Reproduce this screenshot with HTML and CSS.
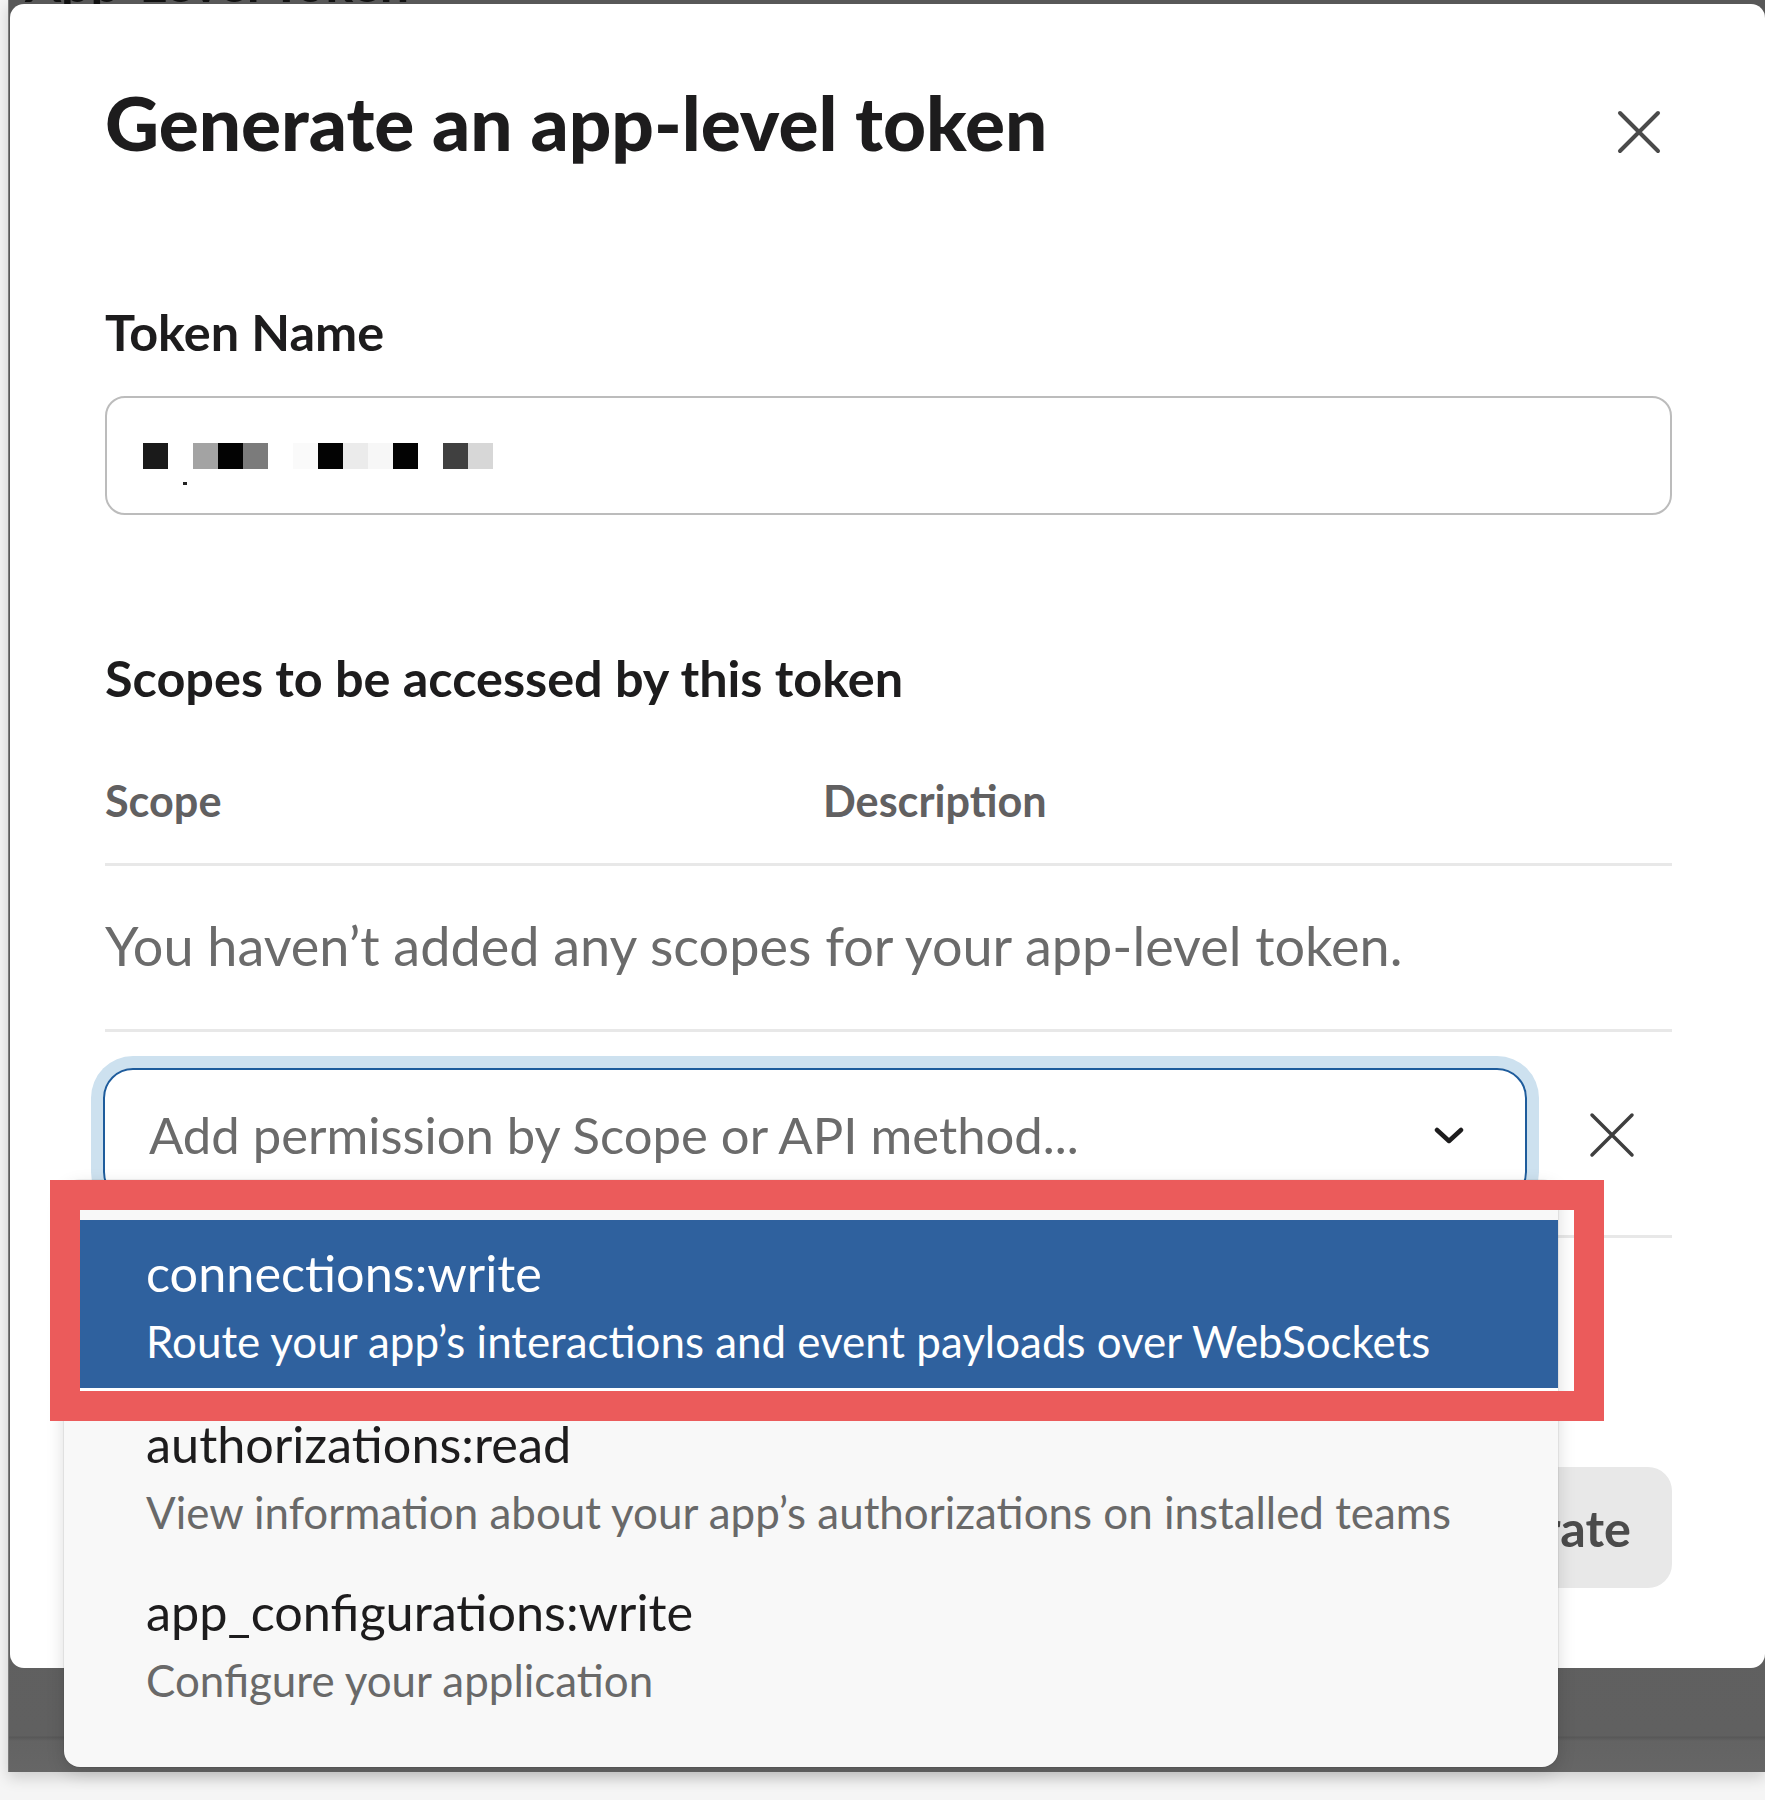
FILE: index.html
```html
<!DOCTYPE html>
<html lang="en">
<head>
<meta charset="utf-8">
<title>Generate an app-level token</title>
<link rel="stylesheet" href="styles.css">
</head>
<body>
<div class="page">
  <div class="backdrop">
    <div class="behind"><span>App-Level Token</span></div>
    <div class="modal">
      <div class="modal-head">
        <h1 class="title">Generate an app-level token</h1>
        <button class="close" aria-label="Close">
          <svg viewBox="0 0 46 46" width="46" height="46"><path d="M4 4 L42 42 M42 4 L4 42" stroke="#4a4a4a" stroke-width="4" stroke-linecap="round" fill="none"/></svg>
        </button>
      </div>
      <label class="field-label">Token Name</label>
      <div class="text-input">
        <div class="redacted">
          <span class="c0"></span><span class="cw"></span><span class="c1"></span><span class="c2"></span><span class="c3"></span><span class="cw"></span><span class="c4"></span><span class="c2"></span><span class="c5"></span><span class="c6"></span><span class="c2"></span><span class="cw"></span><span class="c7"></span><span class="c8"></span>
        </div>
        <span class="dot"></span>
      </div>
      <h2 class="section-title">Scopes to be accessed by this token</h2>
      <div class="thead"><span class="th th-scope">Scope</span><span class="th">Description</span></div>
      <div class="empty">You haven’t added any scopes for your app-level token.</div>
      <div class="add-row">
        <div class="select">
          <span class="placeholder">Add permission by Scope or API method...</span>
          <svg class="chevron" viewBox="0 0 30 17" width="30" height="17"><polyline points="3,3 15,14 27,3" stroke="#1d1c1d" stroke-width="4.5" stroke-linecap="round" stroke-linejoin="round" fill="none"/></svg>
        </div>
        <button class="clear" aria-label="Remove">
          <svg viewBox="0 0 46 46" width="46" height="46"><path d="M3 3 L43 43 M43 3 L3 43" stroke="#3f3f3f" stroke-width="3.5" stroke-linecap="round" fill="none"/></svg>
        </button>
      </div>
      <div class="footer"><button class="generate">Generate</button></div>
    </div>
  </div>

  <div class="menu">
    <div class="option selected">
      <div class="opt-name">connections:write</div>
      <div class="opt-desc">Route your app’s interactions and event payloads over WebSockets</div>
    </div>
    <div class="option">
      <div class="opt-name">authorizations:read</div>
      <div class="opt-desc">View information about your app’s authorizations on installed teams</div>
    </div>
    <div class="option">
      <div class="opt-name">app_configurations:write</div>
      <div class="opt-desc">Configure your application</div>
    </div>
  </div>
  <div class="annotation"></div>
</div>
</body>
</html>
```

FILE: styles.css
```css
body {
  margin: 0;
  background: #f5f5f5;
  font-family: Lato, "Noto Sans", sans-serif;
}
.page {
  position: relative;
  width: 1765px;
  height: 1800px;
  overflow: hidden;
  display: flex;
  padding-left: 8px;
  box-sizing: border-box;
}
.backdrop {
  width: 1757px;
  height: 1772px;
  flex: none;
  background: linear-gradient(to bottom, #585858 0, #606060 1736px, #575757 1737px, #636363 1741px, #666 1772px);
  border-left: 1px solid #7c7c7c;
  box-sizing: border-box;
  display: flex;
  flex-direction: column;
  box-shadow: 0 6px 14px rgba(0, 0, 0, 0.16);
}
.behind {
  height: 4px;
  flex: none;
  overflow: hidden;
  display: flex;
  flex-direction: column;
  justify-content: flex-end;
  padding-left: 16px;
}
.behind span {
  flex: none;
  font-size: 52px;
  font-weight: 700;
  line-height: 0.8;
  color: #111;
}
.modal {
  margin-left: 1px;
  width: 1755px;
  flex: none;
  background: #fff;
  border-radius: 14px;
  padding: 71px 93px 80px 95px;
  box-sizing: border-box;
}
.modal-head {
  display: flex;
  justify-content: space-between;
  align-items: flex-start;
}
.title {
  margin: 0;
  font-size: 74.7px;
  font-weight: 900;
  line-height: 95px;
  color: #1d1c1d;
}
.close, .clear {
  width: 46px;
  height: 46px;
  padding: 0;
  border: 0;
  background: none;
  display: block;
  flex: none;
}
.close svg, .clear svg { display: block; }
.close { margin: 34px 10px 0 0; }
.field-label {
  display: block;
  margin-top: 131px;
  font-size: 50.4px;
  font-weight: 700;
  line-height: 62px;
  color: #1d1c1d;
}
.text-input {
  margin-top: 33px;
  height: 119px;
  box-sizing: border-box;
  border: 2px solid #bcbcbc;
  border-radius: 20px;
  padding: 45px 36px 0;
}
.redacted { display: flex; height: 26px; }
.redacted span { width: 25px; height: 26px; flex: none; }
.cw { background: #fff; }
.c0 { background: #1a1a1a; }
.c1 { background: #a3a3a3; }
.c2 { background: #030303; }
.c3 { background: #7b7b7b; }
.c4 { background: #fafafa; }
.c5 { background: #ebebeb; }
.c6 { background: #f7f7f7; }
.c7 { background: #404040; }
.c8 { background: #d7d7d7; }
.dot {
  display: block;
  width: 4px;
  height: 3px;
  background: #222;
  margin: 13px 0 0 40px;
}
.section-title {
  margin: 132px 0 0;
  font-size: 50.4px;
  font-weight: 700;
  line-height: 62px;
  color: #1d1c1d;
}
.thead {
  display: flex;
  margin-top: 64px;
  padding-bottom: 35px;
  border-bottom: 3px solid #e8e8e8;
}
.th {
  font-size: 43.2px;
  font-weight: 700;
  line-height: 55px;
  color: #616061;
}
.th-scope { width: 718px; flex: none; }
.empty {
  padding: 46px 0 49px;
  font-size: 54px;
  line-height: 68px;
  color: #6b6b6b;
  border-bottom: 3px solid #e8e8e8;
}
.add-row {
  display: flex;
  align-items: center;
  gap: 62px;
  padding: 36px 0 33px;
  border-bottom: 3px solid #e8e8e8;
}
.select {
  margin-left: -2px;
  width: 1424px;
  height: 134px;
  flex: none;
  box-sizing: border-box;
  border: 2px solid #1e5c9c;
  border-radius: 30px;
  box-shadow: 0 0 0 12px #cde1ef;
  display: flex;
  align-items: center;
  justify-content: space-between;
  padding: 0 61px 0 44px;
}
.placeholder {
  font-size: 50.8px;
  line-height: 66px;
  color: #6b6b6b;
}
.chevron { display: block; flex: none; }
.footer {
  display: flex;
  justify-content: flex-end;
  margin-top: 229px;
}
.generate {
  height: 121px;
  padding: 0 41px;
  border: 0;
  border-radius: 24px;
  background: #e8e8e8;
  color: #4b4b4b;
  font-family: Lato, "Noto Sans", sans-serif;
  font-size: 50.4px;
  font-weight: 700;
}
.menu {
  position: absolute;
  left: 64px;
  top: 1180px;
  width: 1494px;
  height: 587px;
  box-sizing: border-box;
  padding-top: 40px;
  background: #f8f8f8;
  border-radius: 16px;
  box-shadow: 0 6px 18px rgba(0, 0, 0, 0.15), 0 0 0 1px rgba(0, 0, 0, 0.05);
  overflow: hidden;
}
.option {
  height: 168px;
  box-sizing: border-box;
  padding: 22px 0 0 82px;
}
.option.selected {
  height: 171px;
  background: #2f619e;
  border-bottom: 3px solid #fff;
}
.opt-name {
  font-size: 50.4px;
  line-height: 62px;
  color: #1d1c1d;
  white-space: nowrap;
}
.opt-desc {
  margin-top: 8px;
  font-size: 43.9px;
  line-height: 58px;
  color: #696969;
  white-space: nowrap;
}
.selected .opt-name, .selected .opt-desc { color: #fff; }
.annotation {
  position: absolute;
  left: 50px;
  top: 1180px;
  width: 1554px;
  height: 241px;
  box-sizing: border-box;
  border: 30px solid #eb5b5b;
}
```
